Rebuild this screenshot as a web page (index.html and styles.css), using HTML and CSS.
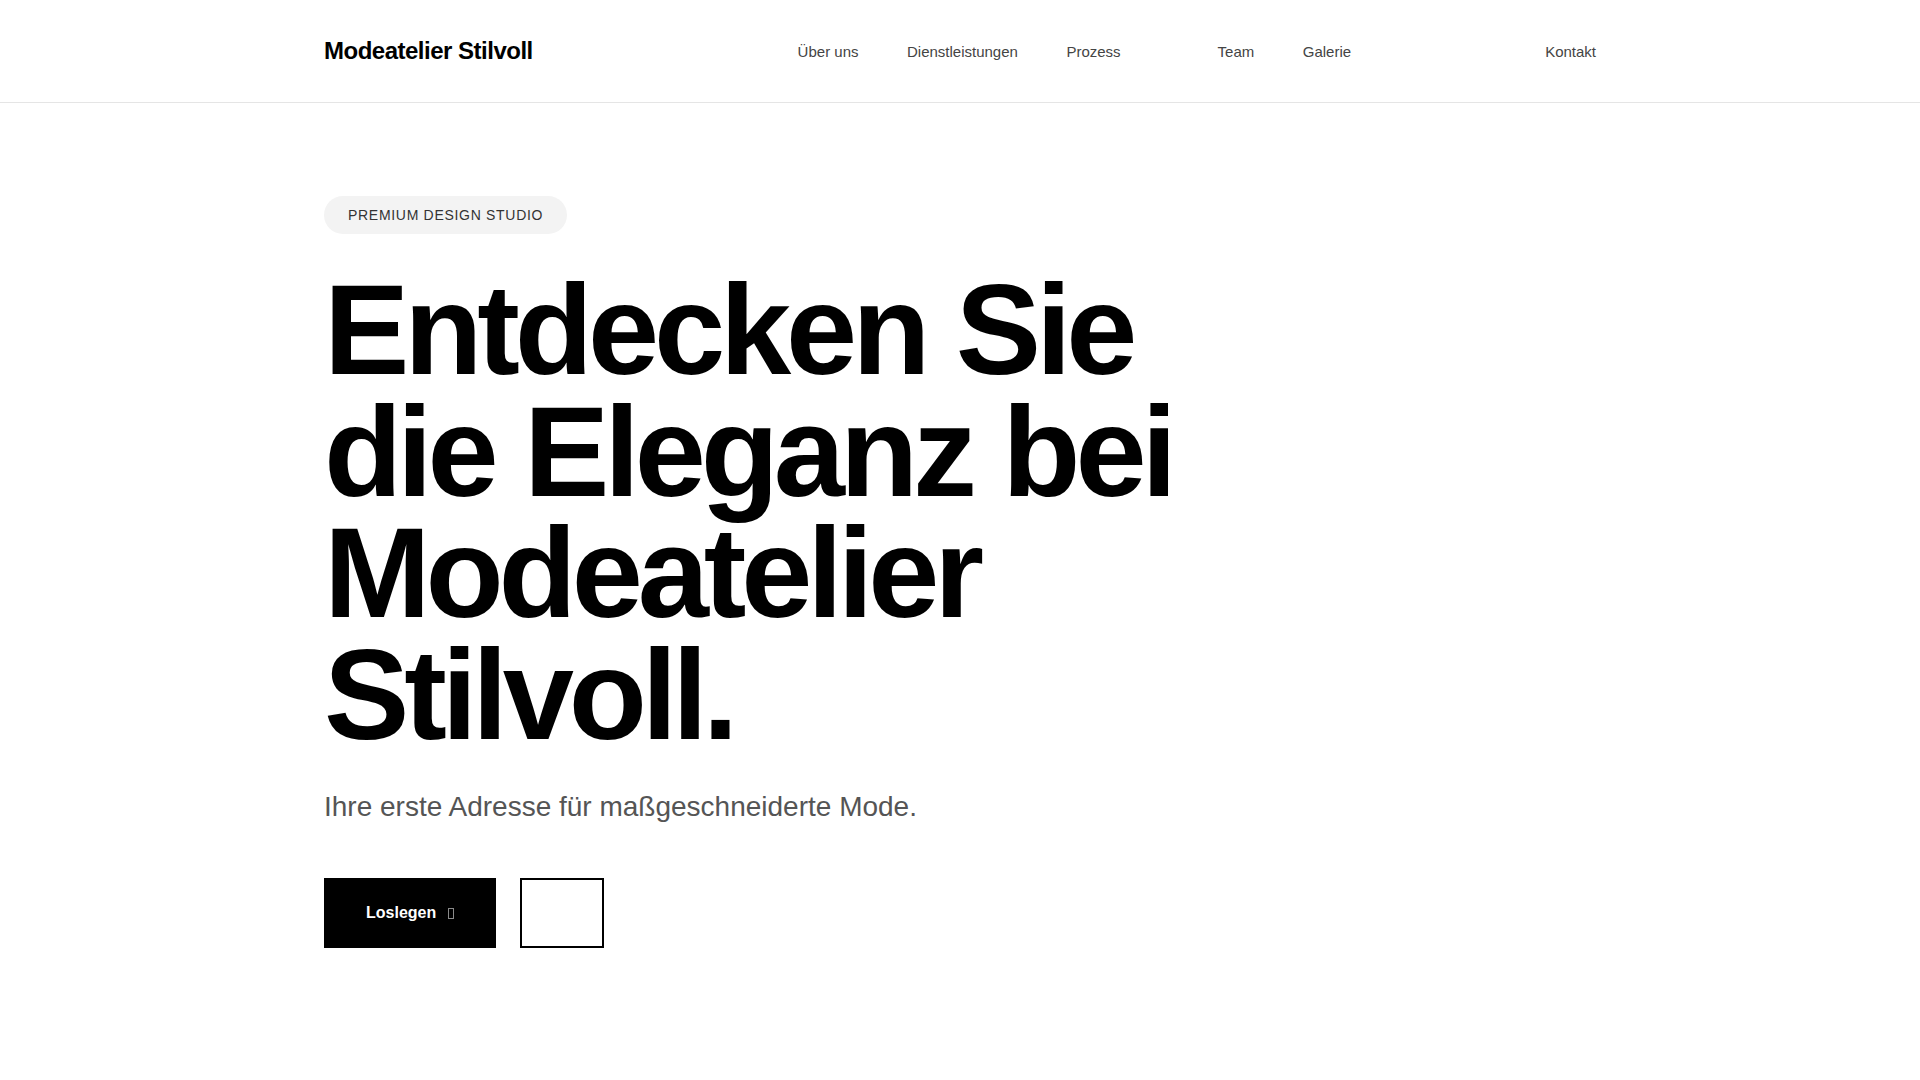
FILE: index.html
```html
<!DOCTYPE html>
<html lang="de">
<head>
<meta charset="utf-8">
<title>Modeatelier Stilvoll</title>
<link rel="stylesheet" href="styles.css">
</head>
<body>
<header class="site-header">
  <div class="container header-inner">
    <a class="logo" href="#">Modeatelier Stilvoll</a>
    <nav class="main-nav">
      <a href="#">Über uns</a>
      <a href="#">Dienstleistungen</a>
      <a href="#">Prozess</a>
      <a href="#"></a>
      <a href="#">Team</a>
      <a href="#">Galerie</a>
      <a href="#"></a>
      <a href="#"></a>
      <a href="#"></a>
      <a href="#">Kontakt</a>
    </nav>
  </div>
</header>
<main>
  <section class="hero">
    <div class="container">
      <span class="badge">Premium Design Studio</span>
      <h1 class="hero-title">Entdecken Sie die Eleganz bei Modeatelier Stilvoll.</h1>
      <p class="hero-sub">Ihre erste Adresse für maßgeschneiderte Mode.</p>
      <div class="hero-actions">
        <a class="btn btn-primary" href="#">Loslegen <span class="tofu"></span></a>
        <a class="btn btn-outline" href="#"></a>
      </div>
    </div>
  </section>
</main>
</body>
</html>
```

FILE: styles.css
```css
* { box-sizing: border-box; }
html, body { margin: 0; padding: 0; background: #ffffff; }
body {
  font-family: "Liberation Sans", Arial, Helvetica, sans-serif;
  color: #000;
}
a { text-decoration: none; color: inherit; }

.container {
  max-width: 1320px;
  margin: 0 auto;
  padding: 0 24px;
}

.site-header {
  border-bottom: 1px solid #e5e5e5;
}
.header-inner {
  height: 102px;
  display: flex;
  align-items: center;
  justify-content: space-between;
}
.logo {
  font-size: 24px;
  font-weight: 700;
  letter-spacing: -0.5px;
  color: #000;
}
.main-nav {
  display: flex;
  gap: 48.5px;
}
.main-nav a {
  font-size: 15px;
  color: #444;
}

.hero { padding-top: 93px; }
.badge {
  display: inline-block;
  background: #f3f3f3;
  color: #333;
  font-size: 14px;
  line-height: 18px;
  letter-spacing: 0.05em;
  text-transform: uppercase;
  padding: 10px 24px;
  border-radius: 999px;
}
.hero-title {
  margin: 35px 0 0;
  max-width: 920px;
  font-size: 128px;
  line-height: 0.95;
  font-weight: 700;
  letter-spacing: -0.04em;
  color: #000;
}
.hero-sub {
  margin: 31px 0 0;
  font-size: 28px;
  line-height: 1.5;
  color: #555;
}
.hero-actions {
  margin-top: 50px;
  display: flex;
  gap: 24px;
}
.btn {
  height: 70px;
  padding: 0 40px;
  display: inline-flex;
  align-items: center;
  font-size: 16px;
  font-weight: 700;
}
.btn-primary {
  background: #000;
  color: #fff;
  padding: 0 40px 0 42px;
}
.tofu {
  display: inline-block;
  width: 6px;
  height: 11px;
  border: 1px solid #8a8a8a;
  margin-left: 12px;
  margin-right: 2px;
}
.btn-outline {
  border: 2px solid #000;
  background: #fff;
  width: 84px;
}
```
